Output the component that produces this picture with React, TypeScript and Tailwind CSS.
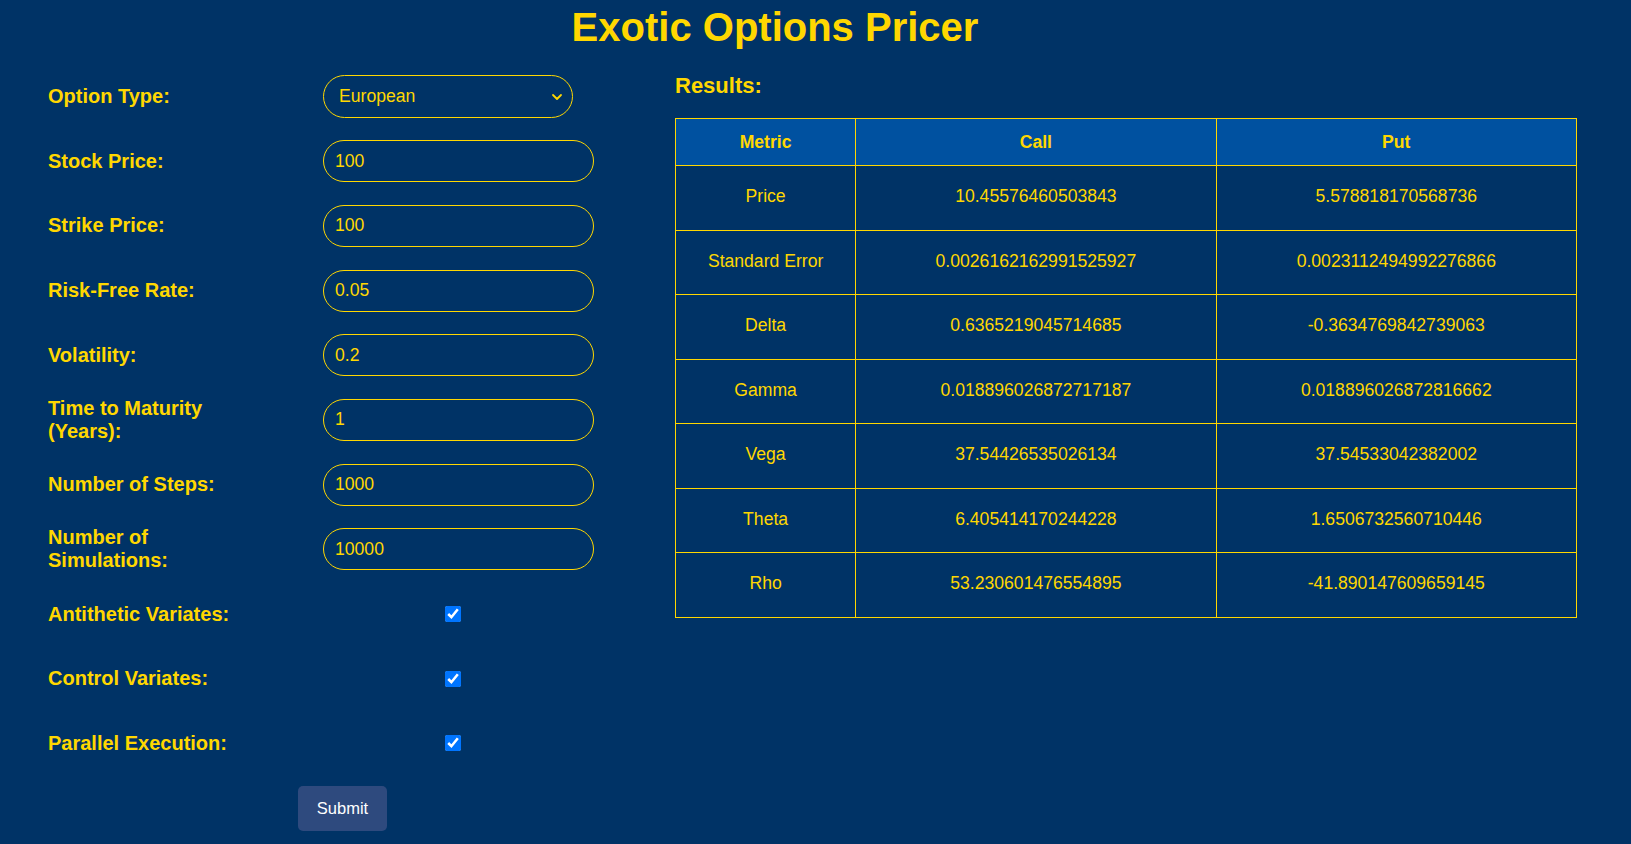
import { useState } from "react";

type Row = { metric: string; call: string; put: string };

const results: Row[] = [
    { metric: "Price", call: "10.45576460503843", put: "5.578818170568736" },
    { metric: "Standard Error", call: "0.0026162162991525927", put: "0.0023112494992276866" },
    { metric: "Delta", call: "0.6365219045714685", put: "-0.3634769842739063" },
    { metric: "Gamma", call: "0.018896026872717187", put: "0.018896026872816662" },
    { metric: "Vega", call: "37.54426535026134", put: "37.54533042382002" },
    { metric: "Theta", call: "6.405414170244228", put: "1.6506732560710446" },
    { metric: "Rho", call: "53.230601476554895", put: "-41.890147609659145" },
]

const textFields = [
    { label: "Stock Price:", value: "100" },
    { label: "Strike Price:", value: "100" },
    { label: "Risk-Free Rate:", value: "0.05" },
    { label: "Volatility:", value: "0.2" },
    { label: "Time to Maturity (Years):", value: "1" },
    { label: "Number of Steps:", value: "1000" },
    { label: "Number of Simulations:", value: "10000" },
]

const checkFields = ["Antithetic Variates:", "Control Variates:", "Parallel Execution:"]

function FieldLabel({ children }: { children: string }) {
    return (
        <label className="w-[275px] shrink-0 pr-[70px] text-[20px] font-bold leading-[23px]">
            {children}
        </label>
    )
}

export default function App() {
    const [optionType, setOptionType] = useState("European")

    return (
        <div className="min-h-screen bg-[#003366] pt-[4px] font-['Liberation_Sans',Arial,sans-serif] text-[#ffd700]">
            <h1 className="w-[1550px] text-center text-[40px] font-bold leading-[46px]">
                Exotic Options Pricer
            </h1>

            <div className="flex">
                {/* form */}
                <form className="mt-[25.5px] flex w-[675px] shrink-0 flex-col gap-[22.7px] pl-[48px]" onSubmit={(e) => e.preventDefault()}>
                    <div className="flex h-[42px] items-center">
                        <FieldLabel>Option Type:</FieldLabel>
                        <div className="relative w-[250px]">
                            <select
                                value={optionType}
                                onChange={(e) => setOptionType(e.target.value)}
                                className="h-[43px] w-full appearance-none rounded-full border border-[#ffd700] bg-transparent pl-[15px] text-[17.6px] text-[#ffd700] outline-none"
                            >
                                <option className="text-black">European</option>
                                <option className="text-black">Asian</option>
                                <option className="text-black">Barrier</option>
                            </select>
                            <svg className="pointer-events-none absolute right-[10px] top-[18px]" width="12" height="8" viewBox="0 0 12 8" fill="none">
                                <path d="M2 2l4 4 4-4" stroke="#ffd700" strokeWidth="1.8" strokeLinecap="round" strokeLinejoin="round" />
                            </svg>
                        </div>
                    </div>

                    {textFields.map((f) => (
                        <div key={f.label} className="flex h-[42px] items-center">
                            <FieldLabel>{f.label}</FieldLabel>
                            <input
                                type="text"
                                defaultValue={f.value}
                                className="h-[42px] w-[271px] rounded-full border border-[#ffd700] bg-transparent px-[11px] text-[17.6px] text-[#ffd700] outline-none"
                            />
                        </div>
                    ))}

                    {checkFields.map((label) => (
                        <div key={label} className="flex h-[42px] items-center">
                            <FieldLabel>{label}</FieldLabel>
                            <input type="checkbox" defaultChecked className="ml-[122px] h-4 w-4 accent-[#0075ff]" />
                        </div>
                    ))}

                    <div className="-mt-[1px]">
                        <button type="submit" className="ml-[250px] h-[45px] w-[89px] rounded-[5px] bg-[#2e4a7e] text-[16.5px] text-white">
                            Submit
                        </button>
                    </div>
                </form>

                {/* results */}
                <div className="mt-[23px] w-[902px] shrink-0">
                    <h2 className="text-[22px] font-bold leading-[25px]">Results:</h2>
                    <table className="mt-[20px] w-full table-fixed border-collapse text-center text-[17.6px]">
                        <thead>
                            <tr className="h-[47px] bg-[#0051a0]">
                                <th className="w-[20%] border border-[#ffd700] font-bold">Metric</th>
                                <th className="w-[40%] border border-[#ffd700] font-bold">Call</th>
                                <th className="w-[40%] border border-[#ffd700] font-bold">Put</th>
                            </tr>
                        </thead>
                        <tbody>
                            {results.map((r) => (
                                <tr key={r.metric} className="h-[64.5px]">
                                    <td className="border border-[#ffd700] pb-[3px]">{r.metric}</td>
                                    <td className="border border-[#ffd700] pb-[3px]">{r.call}</td>
                                    <td className="border border-[#ffd700] pb-[3px]">{r.put}</td>
                                </tr>
                            ))}
                        </tbody>
                    </table>
                </div>
            </div>
        </div>
    )
}
